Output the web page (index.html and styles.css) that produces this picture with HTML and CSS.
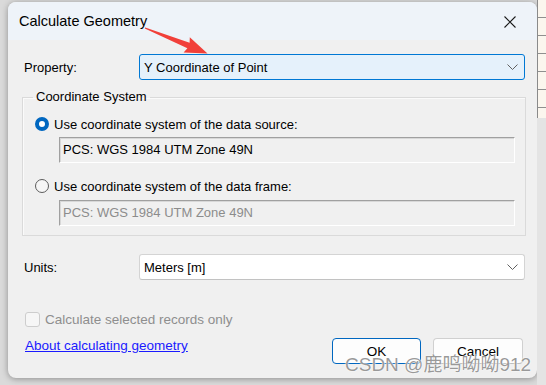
FILE: index.html
```html
<!DOCTYPE html>
<html lang="en">
<head>
<meta charset="UTF-8" />
<title>Calculate Geometry</title>
<link rel="stylesheet" href="styles.css">
</head>
<body>

<div class="screen">
  <div class="dialog">
    <div class="titlebar">
      <span class="title">Calculate Geometry</span>
      <svg class="close" width="12" height="12" viewBox="0 0 12 12">
        <path d="M0.5 0.5 L11.5 11.5 M11.5 0.5 L0.5 11.5" stroke="#1b1b1b" stroke-width="1.1" fill="none" />
      </svg>
    </div>

    <div class="content">
      <div class="row">
        <span class="row-label">Property:</span>
        <div class="combo active">
          <span>Y Coordinate of Point</span>
          <svg class="chevron" width="11" height="6" viewBox="0 0 11 6"><polyline points="0.5,0.5 5.5,5.5 10.5,0.5" fill="none" stroke="#606060" stroke-width="1" /></svg>
        </div>
      </div>

      <fieldset class="group">
        <legend>Coordinate System</legend>
        <div class="group-inner">
          <div class="option"><span class="radio checked"></span>Use coordinate system of the data source:</div>
          <div class="field">PCS: WGS 1984 UTM Zone 49N</div>
          <div class="option second"><span class="radio"></span>Use coordinate system of the data frame:</div>
          <div class="field disabled">PCS: WGS 1984 UTM Zone 49N</div>
        </div>
      </fieldset>

      <div class="row units">
        <span class="row-label">Units:</span>
        <div class="combo">
          <span>Meters [m]</span>
          <svg class="chevron" width="11" height="6" viewBox="0 0 11 6"><polyline points="0.5,0.5 5.5,5.5 10.5,0.5" fill="none" stroke="#606060" stroke-width="1" /></svg>
        </div>
      </div>

      <div class="check"><span class="box"></span>Calculate selected records only</div>

      <div class="footer">
        <a class="help" href="#">About calculating geometry</a>
        <div class="buttons">
          <button class="btn default">OK</button>
          <button class="btn">Cancel</button>
        </div>
      </div>
    </div>
  </div>

  <div class="side"><div class="side-table"></div></div>

  <!-- annotation arrow -->
  <svg class="arrow" width="546" height="385" viewBox="0 0 546 385">
    <polygon points="144.8,28.6 187.4,48.3 183.6,52.4 207.5,53.5 189.8,37.2 189.6,42.7 145.2,27.4" fill="#f1403a" />
  </svg>

  <div class="watermark">CSDN @鹿鸣呦呦912</div>
</div>

</body>
</html>
```

FILE: styles.css
```css
/* --- page --- */
body {
  margin: 0;
  background: #dadada;
  font-family: "Liberation Sans", Arial, sans-serif;
  font-size: 13px;
  color: #000;
}
.screen {
  position: relative;
  width: 546px;
  height: 385px;
  overflow: hidden;
  display: flex;
  align-items: flex-start;
}

/* --- dialog --- */
.dialog {
  width: 529px;
  height: 376px;
  margin: 2px 0 0 8px;
  background: #f0f0f0;
  border-radius: 8px;
  box-shadow: 0 1px 6px rgba(0, 0, 0, 0.35);
  overflow: hidden;
  flex-shrink: 0;
}
.titlebar {
  height: 38px;
  background: #eef3f9;
  display: flex;
  align-items: center;
  justify-content: space-between;
  padding: 0 21px 0 11px;
}
.title {
  font-size: 14.5px;
  line-height: 18px;
}
.close {
  display: block;
  margin-top: 1px;
}

.content {
  padding: 14px 12px 0 16px;
}

/* label + combo rows */
.row {
  display: flex;
  align-items: center;
}
.row-label {
  width: 115px;
  flex-shrink: 0;
}
.combo {
  flex: 1;
  height: 26px;
  box-sizing: border-box;
  border: 1px solid #d4d4d4;
  border-bottom-color: #c2c2c2;
  border-radius: 3px;
  background: #fff;
  display: flex;
  align-items: center;
  justify-content: space-between;
  padding: 0 6px 0 4px;
}
.combo.active {
  border-color: #0078d4;
  background: #e5f1fb;
}
.chevron {
  display: block;
}

/* coordinate system group */
.group {
  margin: 9px -1px 0 -2px;
  padding: 0;
  border: 1px solid #dadada;
  box-shadow: inset 1px 1px 0 #fafafa;
}
.group legend {
  margin-left: 10px;
  padding: 0 3px;
  line-height: 16px;
}
.group-inner {
  padding: 11px 10px 9px 12px;
}
.option {
  display: flex;
  align-items: center;
  height: 16px;
}
.option.second {
  margin-top: 15px;
}
.radio {
  width: 14px;
  height: 14px;
  box-sizing: border-box;
  border-radius: 50%;
  border: 1px solid #5c5c5c;
  background: #f6f6f6;
  margin-right: 5px;
}
.radio.checked {
  border: 4.5px solid #0067c0;
  background: #fff;
}
.field {
  margin: 5px 0 0 24px;
  height: 26px;
  box-sizing: border-box;
  border: 1px solid #a0a0a0;
  border-right-color: #fff;
  border-bottom-color: #fff;
  box-shadow: inset 1px 1px 0 #d8d8d8;
  padding: 0 3px;
  line-height: 24px;
}
.field.disabled {
  margin-top: 6px;
  color: #8c8c8c;
}

.units {
  margin-top: 18px;
}

/* checkbox */
.check {
  margin-top: 31px;
  padding-left: 1px;
  display: flex;
  align-items: center;
  height: 16px;
  font-size: 13.5px;
  color: #8e8e8e;
}
.check .box {
  width: 15px;
  height: 15px;
  box-sizing: border-box;
  border: 1px solid #cdcdcd;
  border-radius: 3px;
  background: #f6f6f6;
  margin-right: 5px;
}

/* footer */
.footer {
  margin-top: 11px;
  display: flex;
  justify-content: space-between;
  align-items: flex-start;
}
.help {
  margin-left: 1px;
  font-size: 13.5px;
  line-height: 16px;
  color: #1a1aff;
  text-decoration: underline;
}
.buttons {
  display: flex;
  gap: 12px;
  margin-right: 2px;
}
.btn {
  width: 90px;
  height: 26px;
  box-sizing: border-box;
  border: 1px solid #d0d0d0;
  border-bottom-color: #bdbdbd;
  border-radius: 4px;
  background: #fdfdfd;
  font-family: "Liberation Sans", Arial, sans-serif;
  font-size: 13.5px;
  color: #000;
  padding: 0;
}
.btn.default {
  width: 89px;
  border: 1.5px solid #0067c0;
}

/* window behind, on the right */
.side {
  flex: 1;
  height: 385px;
  background: #e4e4e4;
}
.side-table {
  height: 118px;
  border-left: 1px solid #8a8a8a;
  background: repeating-linear-gradient(to bottom, #fbf6ee 0 17px, #8f8f8f 17px 18px);
}

/* overlays */
.arrow {
  position: absolute;
  left: 0;
  top: 0;
}
.watermark {
  position: absolute;
  left: 345px;
  top: 354px;
  font-family: "Liberation Sans", "Noto Sans CJK SC", sans-serif;
  font-size: 19px;
  line-height: 22px;
  color: rgba(120, 120, 120, 0.75);
  text-shadow: 0 0 1px #fff, 0 0 2px #fff;
  white-space: nowrap;
}
```
